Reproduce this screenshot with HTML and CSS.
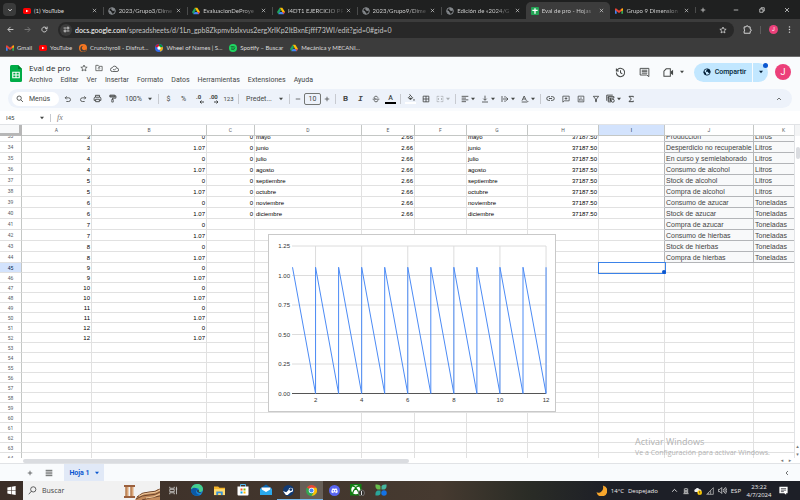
FILE: index.html
```html
<!DOCTYPE html>
<html lang="es">
<head>
<meta charset="utf-8">
<title>Eval de pro - Hojas de cálculo</title>
<link rel="stylesheet" href="styles.css">
</head>
<body>
<svg class="defs" aria-hidden="true">
  <symbol id="yt" viewBox="0 0 24 24"><rect x="0" y="3" width="24" height="18" rx="5" fill="#f00"/><path d="M9 8l8 4-8 4z" fill="#fff"/></symbol>
  <symbol id="globe" viewBox="0 0 24 24"><circle cx="12" cy="12" r="10" fill="none" stroke="#85898d" stroke-width="3"/><path d="M3 10l6 3 1 3 3 2-1 4-5-2-4-6zM11 3l-2 4 3 2 2 3 6-1 1-4-5-4z" fill="#85898d"/></symbol>
  <symbol id="drive" viewBox="0 0 24 24"><path d="M8 2h8l8 13h-8z" fill="#fbbc04"/><path d="M8 2l4 7-8 13-4-7z" fill="#1ea362"/><path d="M8 15h16l-4 7H4z" fill="#4285f4"/><path d="M16 15h8l-4 7z" fill="#ea4335"/></symbol>
  <symbol id="sheets" viewBox="0 0 24 24"><rect width="24" height="24" rx="3" fill="#23a455"/><path d="M12 4v16M4 10h16" stroke="#fff" stroke-width="4"/></symbol>
  <symbol id="gmail" viewBox="0 0 24 24"><path d="M0 5v15h5V10z" fill="#4285f4"/><path d="M24 5v15h-5V10z" fill="#34a853"/><path d="M0 5l3-1 9 7 9-7 3 1v4l-12 9L0 9z" fill="#ea4335"/><path d="M19 7l3-3 2 2v4l-5 3z" fill="#fbbc04"/></symbol>
  <symbol id="x" viewBox="0 0 24 24"><path d="M4 4l16 16M20 4L4 20" stroke="currentColor" stroke-width="3" fill="none"/></symbol>
  <symbol id="plus" viewBox="0 0 24 24"><path d="M12 3v18M3 12h18" stroke="currentColor" stroke-width="3" fill="none"/></symbol>
  <symbol id="minus" viewBox="0 0 24 24"><path d="M3 12h18" stroke="currentColor" stroke-width="3" fill="none"/></symbol>
  <symbol id="caret" viewBox="0 0 10 10"><path d="M0 2h10L5 8z" fill="currentColor"/></symbol>
  <symbol id="down" viewBox="0 0 24 24"><path d="M5 8l7 8 7-8" stroke="currentColor" stroke-width="3.5" fill="none"/></symbol>
  <symbol id="up" viewBox="0 0 24 24"><path d="M4 16l8-8 8 8" stroke="currentColor" stroke-width="3" fill="none"/></symbol>
  <symbol id="prev" viewBox="0 0 24 24"><path d="M16 4l-8 8 8 8" stroke="currentColor" stroke-width="3" fill="none"/></symbol>
  <symbol id="back" viewBox="0 0 24 24"><path d="M22 12H4M12 3l-9 9 9 9" stroke="currentColor" stroke-width="3" fill="none"/></symbol>
  <symbol id="fwd" viewBox="0 0 24 24"><path d="M2 12h18M12 3l9 9-9 9" stroke="currentColor" stroke-width="3" fill="none"/></symbol>
  <symbol id="reload" viewBox="0 0 24 24"><path d="M20 12a8.500 8.500 0 1 1-3-6.500l3 3M21 2v7h-7" stroke="currentColor" stroke-width="3" fill="none"/></symbol>
  <symbol id="tune" viewBox="0 0 24 24"><path d="M2 7h9M13 17h9" stroke="currentColor" stroke-width="3"/><circle cx="17" cy="7" r="3.500" fill="none" stroke="currentColor" stroke-width="3"/><circle cx="7" cy="17" r="3.500" fill="none" stroke="currentColor" stroke-width="3"/></symbol>
  <symbol id="star" viewBox="0 0 24 24"><path d="M12 3l2.700 6.200 6.800.600-5.200 4.400 1.600 6.600L12 17.300l-5.900 3.500 1.600-6.600-5.200-4.400 6.800-.600z" fill="none" stroke="currentColor" stroke-width="2.200"/></symbol>
  <symbol id="ext" viewBox="0 0 24 24"><path d="M3 5h5a3 3 0 0 1 6 0h5v6a3 3 0 0 1 0 6v5H3v-6a3 3 0 0 0 0-5z" fill="none" stroke="currentColor" stroke-width="2.500"/></symbol>
  <symbol id="dots" viewBox="0 0 24 24"><g fill="currentColor"><circle cx="12" cy="3" r="2.500"/><circle cx="12" cy="12" r="2.500"/><circle cx="12" cy="21" r="2.500"/></g></symbol>
  <symbol id="restore" viewBox="0 0 24 24"><path d="M3 8h13v13H3zM8 8V3h13v13h-5" fill="none" stroke="currentColor" stroke-width="3"/></symbol>
  <symbol id="search" viewBox="0 0 24 24"><circle cx="9.500" cy="9.500" r="6.500" fill="none" stroke="currentColor" stroke-width="2.500"/><path d="M14 14l7 7" stroke="currentColor" stroke-width="2.500"/></symbol>
  <symbol id="undo" viewBox="0 0 24 24"><path d="M8 4L3.500 8.500 8 13M4 8.500h10a5.500 5.500 0 0 1 0 11H7" fill="none" stroke="currentColor" stroke-width="2.500"/></symbol>
  <symbol id="redo" viewBox="0 0 24 24"><path d="M16 4l4.500 4.500L16 13M20 8.500H10a5.500 5.500 0 0 0 0 11h7" fill="none" stroke="currentColor" stroke-width="2.500"/></symbol>
  <symbol id="print" viewBox="0 0 24 24"><path d="M6.500 8V3.500h11V8M6 17H3v-5q0-3.500 3-3.500h12q3 0 3 3.500v5h-3M7 14h10v6.500H7z" fill="none" stroke="currentColor" stroke-width="2.500"/></symbol>
  <symbol id="paint" viewBox="0 0 24 24"><path d="M5 3h13v5H5zM18 5h3v6h-9v4" fill="none" stroke="currentColor" stroke-width="2.500"/><path d="M5 4h12v3H5z" fill="currentColor"/><path d="M10 14.500h4v7h-4z" fill="none" stroke="currentColor" stroke-width="2"/></symbol>
  <symbol id="arrowl" viewBox="0 0 10 8"><path d="M10 4H3M5 1L2 4l3 3" fill="none" stroke="currentColor" stroke-width="2"/></symbol>
  <symbol id="arrowr" viewBox="0 0 10 8"><path d="M0 4h7M5 1l3 3-3 3" fill="none" stroke="currentColor" stroke-width="2"/></symbol>
  <symbol id="strike" viewBox="0 0 24 24"><path d="M2 12.500h20M17.500 8c0-5-11-6-11 0 0 2 2 3 4 3.500M6.500 16c0 6 12 5.500 11 0" fill="none" stroke="currentColor" stroke-width="2.500"/></symbol>
  <symbol id="fill" viewBox="0 0 24 24"><path d="M8 2l9 9-6.500 6.500L4 11l7-7z" fill="none" stroke="currentColor" stroke-width="2.500"/><path d="M4.500 11.500h12l-6 6zM21 14q-2 3-2 4a2 2 0 0 0 4 0q0-1-2-4z" fill="currentColor"/></symbol>
  <symbol id="borders" viewBox="0 0 24 24"><path d="M3.500 3.500h17v17h-17zM12 3v18M3 12h18" fill="none" stroke="currentColor" stroke-width="2.500"/></symbol>
  <symbol id="merge" viewBox="0 0 24 24"><path d="M3 8V4h7M14 4h7v4M3 16v4h7M14 20h7v-4M1 12h8M6 9l3 3-3 3M23 12h-8M18 9l-3 3 3 3" fill="none" stroke="currentColor" stroke-width="2.200"/></symbol>
  <symbol id="align" viewBox="0 0 24 24"><path d="M2 4h20M2 9.300h13M2 14.600h20M2 20h13" stroke="currentColor" stroke-width="2.500"/></symbol>
  <symbol id="valign" viewBox="0 0 24 24"><path d="M3 21h18M12 2v13M7 11l5 5 5-5" fill="none" stroke="currentColor" stroke-width="2.500"/></symbol>
  <symbol id="wrap" viewBox="0 0 24 24"><path d="M3 3v18M12 3v5M12 16v5M6 12h14M16 7l5 5-5 5" fill="none" stroke="currentColor" stroke-width="2.500"/></symbol>
  <symbol id="rotate" viewBox="0 0 24 24"><path d="M3 17L9.500 3 16 17M6 12h7M2 21h17M18 17l4 4" fill="none" stroke="currentColor" stroke-width="2.500"/></symbol>
  <symbol id="link" viewBox="0 0 24 24"><path d="M10.500 7H7a5 5 0 0 0 0 10h3.500M13.500 7H17a5 5 0 0 1 0 10h-3.500M8 12h8" fill="none" stroke="currentColor" stroke-width="2.400"/></symbol>
  <symbol id="addnote" viewBox="0 0 24 24"><path d="M2.500 3.500h19v14H7l-4.500 4zM12 6.500v8M8 10.500h8" fill="none" stroke="currentColor" stroke-width="2.300"/></symbol>
  <symbol id="chart" viewBox="0 0 24 24"><path d="M3.500 3.500h17v17h-17zM8 17v-6M12 17V7M16 17v-4" fill="none" stroke="currentColor" stroke-width="2.300"/></symbol>
  <symbol id="filter" viewBox="0 0 24 24"><path d="M4 4h16l-6.500 8v8h-3v-8z" fill="none" stroke="currentColor" stroke-width="2.500"/></symbol>
  <symbol id="views" viewBox="0 0 24 24"><path d="M2 18V3h16M6 7h15v4H6zM6 7v14h7M6 16h8M12 11v9" fill="none" stroke="currentColor" stroke-width="2.500"/><circle cx="18" cy="18" r="4" fill="none" stroke="currentColor" stroke-width="2.500"/></symbol>
  <symbol id="sigma" viewBox="0 0 24 24"><path d="M19 7V4H6l7 8-7 8h13v-3" fill="none" stroke="currentColor" stroke-width="3"/></symbol>
  <symbol id="folder" viewBox="0 0 24 24"><path d="M2.500 20V4h7l2 3h10v13zM12 10v7M9 13l3-3 3 3" fill="none" stroke="currentColor" stroke-width="2.200"/></symbol>
  <symbol id="cloud" viewBox="0 0 24 24"><path d="M6.500 20a5 5 0 0 1-.500-10 6.500 6.500 0 0 1 12.500 1 4.500 4.500 0 0 1 0 9zM8.500 13.500l3 3 5-5" fill="none" stroke="currentColor" stroke-width="2.200"/></symbol>
  <symbol id="history" viewBox="0 0 24 24"><path d="M3 12a9 9 0 1 0 3-6.700L3 8M3 3v5.500h5.500M12 7v5.500l4 2.500" fill="none" stroke="currentColor" stroke-width="2.200"/></symbol>
  <symbol id="comment" viewBox="0 0 24 24"><path d="M2.500 3h19v18L17 17.500H2.500zM6 7h12M6 10.200h12M6 13.500h12" fill="none" stroke="currentColor" stroke-width="2"/></symbol>
  <symbol id="meet" viewBox="0 0 24 24"><path d="M7 4h9v16H2V9z" fill="none" stroke="currentColor" stroke-width="2.200"/><path d="M17 10l5-4v12l-5-4z" fill="currentColor"/></symbol>
  <symbol id="earth" viewBox="0 0 24 24"><circle cx="12" cy="12" r="9.500" fill="none" stroke="currentColor" stroke-width="2.500"/><path d="M3 9l6 6v5l3 2-6-2-4-6zM13 2v3l-4 3v3h6l1 4 3 1 3-4-1-6-4-3z" fill="currentColor"/></symbol>
  <symbol id="list" viewBox="0 0 24 24"><path d="M2 4h20M2 9.300h20M2 14.600h20M2 20h20" stroke="currentColor" stroke-width="2.500"/></symbol>
</svg>

<header class="browser">
  <div class="tabstrip">
    <button class="tabsearch" aria-label="Buscar pestañas"><svg class="i6"><use href="#down"/></svg></button>
    <nav class="tabs">
      <a class="tab" href="#"><svg class="i8"><use href="#yt"/></svg><span>(1) YouTube</span><svg class="i5"><use href="#x"/></svg></a>
      <a class="tab" href="#"><svg class="i8"><use href="#globe"/></svg><span class="fade">2023/Grupo3/Dime</span><svg class="i5"><use href="#x"/></svg></a>
      <a class="tab" href="#"><svg class="i8"><use href="#drive"/></svg><span class="fade">EvaluacionDeProye</span><svg class="i5"><use href="#x"/></svg></a>
      <a class="tab" href="#"><svg class="i8"><use href="#drive"/></svg><span class="fade">I4DT1 EJERCICIO PR</span><svg class="i5"><use href="#x"/></svg></a>
      <a class="tab" href="#"><svg class="i8"><use href="#globe"/></svg><span class="fade">2023/Grupo9/Dime</span><svg class="i5"><use href="#x"/></svg></a>
      <a class="tab" href="#"><svg class="i8"><use href="#globe"/></svg><span class="fade">Edición de «2024/G</span><svg class="i5"><use href="#x"/></svg></a>
      <a class="tab active" href="#"><svg class="i8"><use href="#sheets"/></svg><span class="fade">Eval de pro - Hojas</span><svg class="i5"><use href="#x"/></svg></a>
      <a class="tab" href="#"><svg class="i8"><use href="#gmail"/></svg><span class="fade">Grupo 9 Dimension</span><svg class="i5"><use href="#x"/></svg></a>
    </nav>
    <button class="newtab" aria-label="Nueva pestaña"><svg class="i6"><use href="#plus"/></svg></button>
    <div class="winctl">
      <button aria-label="Minimizar"><svg class="i6"><use href="#minus"/></svg></button>
      <button aria-label="Restaurar"><svg class="i6"><use href="#restore"/></svg></button>
      <button aria-label="Cerrar"><svg class="i6"><use href="#x"/></svg></button>
    </div>
  </div>
  <div class="addressrow">
    <button aria-label="Atrás"><svg class="i7"><use href="#back"/></svg></button>
    <button class="off" aria-label="Adelante"><svg class="i7"><use href="#fwd"/></svg></button>
    <button aria-label="Recargar"><svg class="i7"><use href="#reload"/></svg></button>
    <div class="omnibox">
      <span class="tune"><svg class="i7"><use href="#tune"/></svg></span>
      <span class="url"><b>docs.google.com</b>/spreadsheets/d/1Ln_gpb8ZkpmvbsIxvus2ergXrIKp2ItBxnEjfff73WI/edit?gid=0#gid=0</span>
      <svg class="i8"><use href="#star"/></svg>
    </div>
    <div class="chromeend">
      <svg class="i9"><use href="#ext"/></svg><i></i><span class="ava small">J</span><svg class="i7"><use href="#dots"/></svg>
    </div>
  </div>
  <nav class="bookmarks">
    <a href="#"><svg class="i8"><use href="#gmail"/></svg>Gmail</a>
    <a href="#"><svg class="i8"><use href="#yt"/></svg>YouTube</a>
    <a href="#"><svg class="i8" viewBox="0 0 24 24"><circle cx="12" cy="12" r="12" fill="#f47521"/><path d="M22 14a9 9 0 1 1-9-9 7 7 0 1 0 9 9z" fill="#3c3c3c"/><circle cx="15" cy="12" r="4.500" fill="#f47521"/></svg>Crunchyroll - Disfrut...</a>
    <a href="#"><svg class="i8" viewBox="0 0 24 24"><circle cx="12" cy="12" r="12" fill="#3369e8"/><path d="M12 12V0a12 12 0 0 1 11 8z" fill="#009925"/><path d="M12 12l11-4a12 12 0 0 1-7 15z" fill="#eeb211"/><path d="M12 12L1 8A12 12 0 0 1 12 0z" fill="#d50f25"/><circle cx="12" cy="12" r="5" fill="#fff"/></svg>Wheel of Names | S...</a>
    <a href="#"><svg class="i8" viewBox="0 0 24 24"><circle cx="12" cy="12" r="12" fill="#1ed760"/><path d="M5 8q8-2 14 2M6 12.500q7-2 12 1.500M7 16.500q5-1 9 1" fill="none" stroke="#1b3d27" stroke-width="2"/></svg>Spotify – Buscar</a>
    <a href="#"><svg class="i8"><use href="#drive"/></svg>Mecánica y MECANI...</a>
  </nav>
</header>

<section class="docs">
  <div class="dochead">
    <svg class="doclogo" viewBox="0 0 24 34"><path d="M3 0h13l8 8v23q0 3-3 3H3q-3 0-3-3V3q0-3 3-3z" fill="#00ac47"/><path d="M16 0l8 8h-8z" fill="#00832d"/><path d="M5.500 14.500h13v11h-13zM12 14v12M5 20h14" fill="none" stroke="#fff" stroke-width="2.200"/></svg>
    <div class="doctitles">
      <div class="titleline"><h1>Eval de pro</h1><svg class="i8"><use href="#star"/></svg><svg class="i8"><use href="#folder"/></svg><svg class="i9"><use href="#cloud"/></svg></div>
      <nav class="menus"><a href="#">Archivo</a><a href="#">Editar</a><a href="#">Ver</a><a href="#">Insertar</a><a href="#">Formato</a><a href="#">Datos</a><a href="#">Herramientas</a><a href="#">Extensiones</a><a href="#">Ayuda</a></nav>
    </div>
    <div class="docactions">
      <button aria-label="Historial"><svg class="i11"><use href="#history"/></svg></button>
      <button aria-label="Comentarios"><svg class="i11"><use href="#comment"/></svg></button>
      <button aria-label="Reunión"><svg class="i11"><use href="#meet"/></svg><svg class="i4"><use href="#caret"/></svg></button>
      <div class="share"><button class="sharemain"><svg class="i8"><use href="#earth"/></svg>Compartir</button><button class="sharemore" aria-label="Más opciones"><svg class="i4"><use href="#caret"/></svg></button><span class="dot"></span></div>
      <span class="ava">J</span>
    </div>
  </div>
  <div class="toolbar">
    <label class="menusearch"><svg class="i8"><use href="#search"/></svg><input type="text" placeholder="Menús" aria-label="Menús"></label>
    <button aria-label="Deshacer"><svg class="i8"><use href="#undo"/></svg></button>
    <button aria-label="Rehacer"><svg class="i8"><use href="#redo"/></svg></button>
    <button aria-label="Imprimir"><svg class="i9"><use href="#print"/></svg></button>
    <button aria-label="Copiar formato"><svg class="i9"><use href="#paint"/></svg></button>
    <button class="drop zoom">100%<svg class="i4"><use href="#caret"/></svg></button><i></i>
    <button>$</button><button>%</button><button class="dec">.0<svg><use href="#arrowl"/></svg></button><button class="dec">.00<svg><use href="#arrowr"/></svg></button><button class="n123">123</button><i></i>
    <button class="drop font">Predet...<svg class="i4"><use href="#caret"/></svg></button><i></i>
    <button class="step" aria-label="Reducir"><svg class="i6"><use href="#minus"/></svg></button><input class="size" value="10" aria-label="Tamaño de fuente"><button class="step" aria-label="Aumentar"><svg class="i6"><use href="#plus"/></svg></button><i></i>
    <button class="big"><b>B</b></button><button class="big"><em>I</em></button><button aria-label="Tachado"><svg class="i8"><use href="#strike"/></svg></button><button class="textcolor">A</button><i></i>
    <button class="fillcolor" aria-label="Relleno"><svg class="i8"><use href="#fill"/></svg></button>
    <button aria-label="Bordes"><svg class="i8"><use href="#borders"/></svg></button>
    <button class="combo faded" aria-label="Combinar"><svg class="i8"><use href="#merge"/></svg><svg class="i4"><use href="#caret"/></svg></button><i></i>
    <button class="combo" aria-label="Alinear"><svg class="i8"><use href="#align"/></svg><svg class="i4"><use href="#caret"/></svg></button>
    <button class="combo" aria-label="Alineación vertical"><svg class="i8"><use href="#valign"/></svg><svg class="i4"><use href="#caret"/></svg></button>
    <button class="combo" aria-label="Ajuste"><svg class="i8"><use href="#wrap"/></svg><svg class="i4"><use href="#caret"/></svg></button>
    <button class="combo" aria-label="Rotación"><svg class="i8"><use href="#rotate"/></svg><svg class="i4"><use href="#caret"/></svg></button><i></i>
    <button aria-label="Enlace"><svg class="i9"><use href="#link"/></svg></button>
    <button aria-label="Comentar"><svg class="i8"><use href="#addnote"/></svg></button>
    <button aria-label="Gráfico"><svg class="i8"><use href="#chart"/></svg></button>
    <button aria-label="Filtro"><svg class="i8"><use href="#filter"/></svg></button>
    <button class="combo" aria-label="Vistas"><svg class="i9"><use href="#views"/></svg><svg class="i4"><use href="#caret"/></svg></button>
    <button aria-label="Funciones"><svg class="i8"><use href="#sigma"/></svg></button>
    <button class="collapse" aria-label="Ocultar menús"><svg class="i6"><use href="#up"/></svg></button>
  </div>
</section>

<div class="formula">
  <input class="namebox" value="I45" aria-label="Cuadro de nombres"><svg class="i4"><use href="#caret"/></svg><i></i><em>fx</em><input class="fxinput" aria-label="Fórmula">
</div>

<main class="sheet">
  <div class="gridwrap">
    <div class="grid" id="grid">
      <table>
        <colgroup><col class="c0"><col class="cA"><col class="cB"><col class="cC"><col class="cD"><col class="cE"><col class="cF"><col class="cG"><col class="cH"><col class="cI"><col class="cJ"><col class="cK"></colgroup>
        <thead><tr><th class="corner"></th><th>A</th><th>B</th><th>C</th><th>D</th><th>E</th><th>F</th><th>G</th><th>H</th><th class="sel">I</th><th>J</th><th>K</th></tr></thead>
        <tbody id="rows"></tbody>
      </table>
    </div>
    <svg class="plot" id="plot" viewBox="0 0 286 176" role="img" aria-label="Gráfico de líneas"></svg>
    <div class="watermark"><strong>Activar Windows</strong><span>Ve a Configuración para activar Windows.</span></div>
  </div>
  <div class="vscroll"><span class="head"></span><span class="thumb"></span><span class="arrow">▴</span><span class="arrow">▾</span></div>
</main>
<div class="hscroll"><span class="thumb"></span><span class="arrow">◂</span><span class="arrow">▸</span></div>

<nav class="sheetbar">
  <button aria-label="Añadir hoja"><svg class="i6"><use href="#plus"/></svg></button>
  <button aria-label="Todas las hojas"><svg class="i8"><use href="#list"/></svg></button>
  <button class="sheettab">Hoja 1<svg class="i4"><use href="#caret"/></svg></button>
  <button class="side" aria-label="Mostrar panel"><svg class="i6"><use href="#prev"/></svg></button>
</nav>

<footer class="taskbar">
  <button class="start" aria-label="Inicio"><svg class="i9" viewBox="0 0 24 24"><path d="M1 4l10-2v9H1zM12.500 2L23 0v11H12.500zM1 12.500h10V22L1 20zM12.500 12.500H23V24l-10.500-2z" fill="#fff"/></svg></button>
  <label class="tasksearch"><svg class="i9" viewBox="0 0 24 24"><circle cx="14" cy="9" r="7" fill="none" stroke="#333" stroke-width="2"/><path d="M9 14l-7 8" stroke="#333" stroke-width="2"/></svg><input type="text" placeholder="Buscar" aria-label="Buscar">
    <svg class="art" viewBox="0 0 38 16"><path d="M2 2h11M2 13h11" stroke="#9a5f3c" stroke-width="2"/><path d="M5 3v9M10 3v9" stroke="#dca778" stroke-width="3"/><path d="M4 3v9M9 3v9" stroke="#a3693f" stroke-width="1"/><path d="M13 16q4-8 14-8 6 0 9-3l2 2v9z" fill="#c18a5b"/><path d="M15 13q5-5 12-5t11-3M14 15q6-4 13-4t11-3M20 16q6-2 18-4" stroke="#6d452b" stroke-width="1" fill="none"/><path d="M17 12q5-3 11-3t10-3M24 14q7 0 14-4" stroke="#efc99c" stroke-width="1" fill="none"/></svg></label>
  <div class="apps">
    <button aria-label="Vista de tareas"><svg class="i9" viewBox="0 0 24 24"><path d="M2 2v4h12V2M2 22v-4h12v4M2 9h12v6H2zM20 2v20M18 8h4" fill="none" stroke="#ddd" stroke-width="2"/></svg></button>
    <button aria-label="Edge"><svg class="i12" viewBox="0 0 24 24"><circle cx="12" cy="12" r="12" fill="#1683d8"/><path d="M0 11C1-3 23-4 24 10c0 5-5 7-9 5 3-4-1-8-5-7S3 9 0 11z" fill="#45cf8e"/><path d="M0 11c5-6 13-3 13 1-5 1-4 9 5 10C8 27-1 20 0 11z" fill="#0c59a4"/><path d="M14 11q-4 4 1 6 5 1 8-2-4 2-8 0 2-2-1-4z" fill="#34302a"/></svg></button>
    <button aria-label="Explorador"><svg class="i11" viewBox="0 0 24 24"><path d="M0 3h9l3 3h12v16H0z" fill="#f5b52b"/><path d="M0 9h24v13H0z" fill="#ffdb70"/><path d="M5 14h14v8h-4v-4H9v4H5z" fill="#3b93d9"/></svg></button>
    <button aria-label="Tienda"><svg class="i12" viewBox="0 0 24 24"><path d="M7 6V1h10v5" fill="none" stroke="#4fb6ee" stroke-width="2"/><path d="M1 5h22v16q0 2-2 2H3q-2 0-2-2z" fill="#fff"/><path d="M7 9h4v4H7z" fill="#f25022"/><path d="M13 9h4v4h-4z" fill="#7fba00"/><path d="M7 15h4v4H7z" fill="#00a4ef"/><path d="M13 15h4v4h-4z" fill="#ffb900"/></svg></button>
    <button aria-label="Correo"><svg class="i12" viewBox="0 0 24 24"><path d="M0 9l12-8 12 8v13H0z" fill="#0a64ad"/><path d="M3 7h18v9H3z" fill="#fff"/><path d="M0 9l12 7 12-7v13H0z" fill="#2aa9ec"/></svg></button>
    <button class="open" aria-label="Steam"><svg class="i11" viewBox="0 0 24 24"><circle cx="12" cy="12" r="12" fill="#123a73"/><path d="M0 13l7 3 5-5a5 5 0 1 1 5 5l-5 4a4 4 0 0 1-7 0z" fill="#fff"/><circle cx="17" cy="10" r="3" fill="#123a73"/></svg></button>
    <button class="open current" aria-label="Chrome"><svg class="i11" viewBox="0 0 24 24"><circle cx="12" cy="12" r="12" fill="#34a853"/><path d="M12 12L2 5.500a12 12 0 0 1 20.500.500z" fill="#ea4335"/><path d="M12 6h10.500A12 12 0 0 1 12 24l5-9z" fill="#fbbc04"/><circle cx="12" cy="12" r="6" fill="#fff"/><circle cx="12" cy="12" r="4.500" fill="#4285f4"/></svg></button>
    <button aria-label="Discord"><svg class="i11" viewBox="0 0 24 24"><circle cx="12" cy="12" r="12" fill="#5865f2"/><path d="M5 16q0-6 3-9l3 1h2l3-1q3 3 3 9l-4 2-1-2h-4l-1 2z" fill="#fff"/><circle cx="9.500" cy="12.500" r="1.600" fill="#5865f2"/><circle cx="14.500" cy="12.500" r="1.600" fill="#5865f2"/></svg></button>
    <button aria-label="Xbox"><svg class="app-wide" viewBox="0 0 30 24"><path d="M0 0h23v23H0z" fill="#107c10"/><circle cx="11.500" cy="11.500" r="9" fill="#fff"/><path d="M5 19Q7 12 11.500 8 16 12 18 19M5 4q4 0 6.500 3Q14 4 18 4" fill="none" stroke="#107c10" stroke-width="2.500"/><circle cx="23" cy="18" r="6" fill="#33302c" stroke="#aaa"/><path d="M23 14v8" stroke="#ddd" stroke-width="2"/></svg></button>
    <button aria-label="Mesa"><svg class="i12" viewBox="0 0 24 24"><path d="M1 1q9-1 10 4v6H5Q0 9 1 1z" fill="#67bd4c"/><path d="M23 1q-9-1-10 4v6h6q5-2 4-10z" fill="#45b6a0"/><path d="M1 23q9 1 10-4v-6H5q-5 2-4 10z" fill="#2aa59a"/><circle cx="18" cy="18" r="5.500" fill="#1373e6"/></svg></button>
  </div>
  <div class="tray">
    <svg class="i11" viewBox="0 0 24 24"><path d="M15 1a12 12 0 1 1-14 15c8 3 17-4 14-15z" fill="#f6a52c"/></svg>
    <span class="temp">14°C</span><span class="wx">Despejado</span>
    <svg class="i7"><use href="#up"/></svg>
    <svg class="i8" viewBox="0 0 24 24"><path d="M8 5h8M7 5v13h10V5M4 20h16M12 9v6" fill="none" stroke="#ccc" stroke-width="2.500"/><circle cx="12" cy="12" r="3" fill="none" stroke="#ccc" stroke-width="2"/></svg>
    <svg class="i8" viewBox="0 0 24 24"><path d="M3 15a5 5 0 0 1 2-9 6 6 0 0 1 11 1 5 5 0 0 1 5 8z" fill="#eee"/><circle cx="17" cy="17" r="7" fill="#fc0"/><path d="M17 12v6M17 20v2" stroke="#333" stroke-width="2"/></svg>
    <svg class="i8" viewBox="0 0 24 24"><path d="M2 22L22 2v20zM8 22v-6M14 22V10" fill="none" stroke="#aaa" stroke-width="2.500"/></svg>
    <svg class="i9" viewBox="0 0 24 24"><path d="M1 9h4l5-5v16l-5-5H1zM14 8q3 4 0 8M17 5q5 7 0 14M20 3q7 9 0 18" fill="none" stroke="#ddd" stroke-width="2"/></svg>
    <span class="lang">ESP</span>
    <span class="clock"><span>23:22</span><span>4/7/2024</span></span>
    <svg class="i9" viewBox="0 0 24 24"><path d="M1 2h22v17h-4v4l-5-4H1z" fill="#fff"/><path d="M5 7h14M5 11h14M5 15h8" stroke="#33343c" stroke-width="2"/></svg>
  </div>
</footer>
<script src="script.js"></script>
</body>
</html>
```
FILE: styles.css
```css
* { box-sizing: border-box; }
html, body { height: 100%; margin: 0; }
body { display: flex; flex-direction: column; overflow: hidden; background: #fff; color: #444746; font: 7px/10px Roboto, "Liberation Sans", sans-serif; }
button { display: flex; align-items: center; justify-content: center; padding: 0; border: 0; background: none; color: inherit; font: inherit; flex: none; }
input { min-width: 0; padding: 0; border: 0; outline: 0; background: none; color: inherit; font: inherit; }
input::placeholder { color: inherit; opacity: 1; }
a { color: inherit; text-decoration: none; }
svg { flex: none; display: block; }
.defs { position: absolute; width: 0; height: 0; }
.i4 { width: 4px; height: 4px; }
.i5 { width: 5px; height: 5px; }
.i6 { width: 6px; height: 6px; }
.i7 { width: 7px; height: 7px; }
.i8 { width: 8px; height: 8px; }
.i9 { width: 9px; height: 9px; }
.i11 { width: 11px; height: 11px; }
.i12 { width: 12px; height: 12px; }

/* Browser frame */
.browser { flex: none; background: #3c3c3c; color: #dcdcdc; font-family: Lato, sans-serif; font-size: 6px; border-bottom: 1px solid #6c6c6c; }
.tabstrip { display: flex; align-items: center; height: 19px; background: #1f2020; }
.tabsearch { width: 13px; height: 13px; margin: 0 2px 0 3px; border-radius: 4px; background: #3a3b3b; }
.tabs { display: flex; flex: 1; min-width: 0; height: 100%; padding-top: 2px; }
.tab { position: relative; display: flex; flex: 1 1 0; min-width: 0; align-items: center; gap: 3px; padding: 0 6px 0 5px; border-radius: 5px 5px 0 0; }
.tab + .tab:not(.active)::before { content: ""; position: absolute; left: 0; width: 1px; height: 8px; background: #4a4b4b; }
.tab.active + .tab::before { display: none; }
.tab span { flex: 1; min-width: 0; white-space: nowrap; }
.tab .fade { color: transparent; background: linear-gradient(90deg, #dcdcdc 38px, #3c3c3c 54px); background-clip: text; -webkit-background-clip: text; }
.tab.active { background: #3c3c3c; }
.newtab { width: 14px; border-left: 1px solid #4a4b4b; }
.winctl { display: flex; width: 91px; padding-left: 14px; }
.winctl button { flex: 1; }
.addressrow { display: flex; align-items: center; height: 21px; padding-left: 2px; }
.addressrow > button { width: 17px; }
.off { opacity: .4; }
.omnibox { display: flex; flex: 1; align-items: center; gap: 3px; height: 16px; margin-left: 5px; padding: 0 7px 0 2px; border-radius: 8px; background: #282828; font-size: 7px; }
.tune { display: flex; align-items: center; justify-content: center; width: 12px; height: 12px; border-radius: 6px; background: #3c3c3c; }
.url { flex: 1; overflow: hidden; white-space: nowrap; color: #c4c4c4; }
.url b { font-weight: 400; color: #fff; }
.chromeend { display: flex; align-items: center; width: 66px; justify-content: space-between; padding: 0 7px 0 9px; }
.chromeend i { width: 1px; height: 8px; background: #5c5c5c; }
.ava { display: flex; align-items: center; justify-content: center; width: 16px; height: 16px; border-radius: 50%; background: #ec407a; color: #fff; font: 9px/16px Roboto, sans-serif; }
.ava.small { width: 9px; height: 9px; font-size: 5px; line-height: 9px; }
.bookmarks { display: flex; align-items: center; gap: 7px; height: 16px; padding-left: 6px; }
.bookmarks a { display: flex; align-items: center; gap: 3px; white-space: nowrap; }

/* Document header */
.docs { flex: none; padding-bottom: 3px; background: #f9fbfd; }
.dochead { display: flex; align-items: center; height: 32px; padding: 0 9px 0 10px; }
.doclogo { width: 12px; height: 17px; margin-right: 7px; }
.doctitles { flex: 1; min-width: 0; padding-top: 2px; }
.titleline { display: flex; align-items: center; gap: 7px; }
.titleline h1 { margin: 0 3px 0 0; font: 8px/12px "Open Sans", sans-serif; color: #1f1f1f; }
.menus { display: flex; gap: 8px; font-size: 7px; line-height: 12px; white-space: nowrap; }
.docactions { display: flex; align-self: flex-start; align-items: center; gap: 13px; height: 30px; }
.docactions button { gap: 6px; }
.share { position: relative; display: flex; width: 74px; height: 19px; margin-left: -3px; border-radius: 10px; background: #c2e7ff; color: #001d35; }
.share .sharemain { width: 58px; padding-left: 3px; gap: 4px; font-weight: 500; }
.share .sharemore { flex: 1; border-left: 1px solid #f9fbfd; }
.dot { position: absolute; top: 0; right: 0; width: 5px; height: 5px; border-radius: 50%; background: #0b57d0; }
.docactions .ava { margin-left: -6px; }
.toolbar { display: flex; align-items: center; height: 19px; margin: 0 8px; padding-left: 4px; border-radius: 10px; background: #edf2fa; }
.toolbar button { width: 15px; height: 14px; }
.toolbar > i { flex: none; width: 1px; height: 10px; margin: 0 2px; background: #c7cad0; }
.menusearch { display: flex; flex: none; align-items: center; gap: 5px; width: 47px; height: 14px; margin-right: 1px; padding-left: 4px; border-radius: 7px; background: #fff; }
.menusearch input { width: 28px; }
.toolbar .drop { justify-content: space-between; }
.toolbar .zoom { width: 36px; padding: 0 4px 0 5px; }
.toolbar .font { width: 44px; margin-left: 2px; padding: 0 4px 0 3px; }
.toolbar .n123 { font-size: 6px; }
.toolbar .dec { flex-direction: column; font-size: 6px; font-weight: 700; line-height: 7px; }
.dec svg { width: 5px; height: 4px; align-self: flex-end; margin-right: 2px; }
.toolbar .step { width: 12px; }
.size { flex: none; width: 17px; height: 12px; border: 1px solid #747775; border-radius: 2px; text-align: center; }
.toolbar .big { font-size: 8px; }
.big em { font-weight: 700; font-family: "Liberation Mono", monospace; }
.toolbar .textcolor { width: 11px; height: 11px; margin: 0 2px; border-bottom: 2px solid #000; font-weight: 500; }
.toolbar .fillcolor { width: 11px; height: 11px; margin: 0 2px; border-bottom: 2px solid #fff; }
.toolbar .combo { width: 20px; gap: 2px; }
.faded { opacity: .4; }
.toolbar .collapse { margin: 0 6px 0 auto; }

/* Formula bar */
.formula { display: flex; flex: none; align-items: center; height: 14px; padding-left: 6px; border-bottom: 1px solid #e1e3e6; font-size: 6px; }
.namebox { width: 34px; }
.formula i { width: 1px; height: 8px; margin: 0 6px; background: #c7cad0; }
.formula em { font: italic 8px/10px "Liberation Serif", serif; color: #777; }
.fxinput { flex: 1; }

/* Grid */
.sheet { display: flex; flex: 1; min-height: 0; }
.gridwrap { position: relative; flex: 1; min-width: 0; overflow: hidden; }
.grid { height: 100%; overflow: hidden; }
table { table-layout: fixed; width: 814px; border-collapse: separate; border-spacing: 0; font: 6px/8px "Liberation Sans", sans-serif; color: #000; }
.c0 { width: 22px; } .cA { width: 70px; } .cB { width: 115px; } .cC { width: 48px; } .cD { width: 107px; } .cE { width: 53px; }
.cF { width: 52px; } .cG { width: 61px; } .cH { width: 71px; } .cI { width: 66px; } .cJ { width: 89px; } .cK { width: 60px; }
th, td { height: 10px; padding: 0 1px; border: 0 solid #e1e1e1; border-width: 0 1px 1px 0; overflow: hidden; white-space: nowrap; }
td { vertical-align: bottom; }
.tall th, .tall td { height: 11px; }
thead th { position: sticky; top: 0; z-index: 1; height: 11px; background: #fff; border-color: #c4c7c5; }
th { font: 5px/8px Roboto, sans-serif; color: #575b5f; }
thead .corner { background: #f8f9fa; border: 0 solid #b7b7b7; border-width: 0 3px 3px 0; }
tbody th { border-right-color: #c4c7c5; }
th.sel { background: #d3e3fd; color: #041e49; }
.num { text-align: right; }
.boxed { background: #f8f9fa; border-color: #b3b5b8; font-size: 7px; color: #434343; }
.edge { border-right-color: #b3b5b8; }
td.cursor { position: relative; overflow: visible; outline: 1px solid #3b82e8; }
td.cursor::after { content: ""; position: absolute; right: -2px; bottom: -2px; width: 4px; height: 4px; border-radius: 50%; background: #0b57d0; }
.plot { position: absolute; left: 268px; top: 109px; width: 288px; height: 178px; background: #fff; border: 1px solid #c9c9c9; font: 6px "Liberation Sans", sans-serif; }
.plot text { fill: #333; }
.plot .rule { stroke: #dcdcdc; fill: none; }
.plot .axis { stroke: #555; }
.plot .line { stroke: #4c8bf5; fill: none; }
.watermark { position: absolute; left: 635px; bottom: 0; display: flex; flex-direction: column; color: #b2b2b2; font: 7px/10px "Open Sans", sans-serif; white-space: nowrap; }
.watermark strong { font-weight: 400; font-size: 9px; line-height: 12px; }
.vscroll { display: flex; flex-direction: column; align-items: center; width: 6px; border-left: 1px solid #e1e3e6; }
.vscroll .head { width: 100%; height: 11px; margin-bottom: 11px; background: #f4f5f6; }
.vscroll .thumb { width: 4px; height: 12px; margin-bottom: auto; border-radius: 2px; background: #dadce0; }
.arrow { color: #777; font: 5px/8px "DejaVu Sans", sans-serif; text-align: center; }
.hscroll { display: flex; flex: none; align-items: center; height: 6px; padding: 0 6px 0 23px; border-bottom: 1px solid #e1e3e6; }
.hscroll .thumb { width: 50%; height: 4px; margin-right: auto; border-radius: 2px; background: #dadce0; }
.hscroll .arrow { width: 8px; line-height: 5px; }

/* Sheet tabs */
.sheetbar { display: flex; flex: none; height: 17px; padding-left: 20px; background: #f9fbfd; }
.sheetbar button { width: 19px; }
.sheetbar .sheettab { width: 40px; margin-left: 6px; gap: 5px; background: #e1e9f7; color: #0b57d0; font-weight: 700; }
.sheetbar .side { margin: 0 4px 0 auto; }

/* Taskbar */
.taskbar { display: flex; flex: none; height: 19px; background: linear-gradient(90deg, #3b2e27 0, #463a30 55%, #2a2c26 66%, #1d1f27 76%); color: #eee; font-family: "Open Sans", sans-serif; }
.start { width: 23px; }
.tasksearch { display: flex; flex: none; align-items: center; width: 137px; padding-left: 5px; gap: 5px; background: #f1f1f1; color: #444; }
.tasksearch input { flex: 1; }
.art { width: 38px; height: 16px; align-self: flex-end; }
.apps { display: flex; flex: 1; padding-left: 2px; }
.apps button { width: 23px; border-bottom: 1px solid transparent; }
.apps .open { border-color: #76b9ed; }
.apps .current { background: #675f57; }
.app-wide { width: 15px; height: 12px; }
.tray { display: flex; align-items: center; gap: 4px; padding-right: 12px; font-size: 6px; }
.wx { margin-right: 9px; }
.clock { display: flex; flex-direction: column; align-items: center; width: 28px; line-height: 8px; margin-right: 2px; }
```
FILE: script.js
```js
const months = ['mayo', 'junio', 'julio', 'agosto', 'septiembre', 'octubre', 'noviembre', 'diciembre'];
const stock = [
  ['Producción', 'Litros'], ['Desperdicio no recuperable', 'Litros'], ['En curso y semielaborado', 'Litros'],
  ['Consumo de alcohol', 'Litros'], ['Stock de alcohol', 'Litros'], ['Compra de alcohol', 'Litros'],
  ['Consumo de azucar', 'Toneladas'], ['Stock de azucar', 'Toneladas'], ['Compra de azucar', 'Toneladas'],
  ['Consumo de hierbas', 'Toneladas'], ['Stock de hierbas', 'Toneladas'], ['Compra de hierbas', 'Toneladas']
];
const cell = (text, cls) => `<td class="${cls || ''}">${text}</td>`;

let html = '';
for (let r = 33; r <= 64; r++) {
  const i = r - 33;
  const month = months[i];
  const item = stock[i];
  html += `<tr class="${r <= 44 ? 'tall' : ''}"><th class="${r === 45 ? 'sel' : ''}">${r}</th>`
    + cell(r <= 52 ? Math.floor(r / 2 - 13.5) : '', 'num')
    + cell(r <= 52 ? (r % 2 ? '0' : '1.07') : '', 'num')
    + cell(month ? '0' : '', 'num')
    + cell(month || '')
    + cell(month ? '2.66' : '', 'num')
    + cell('')
    + cell(month || '')
    + cell(month ? '37187.50' : '', 'num')
    + cell('', r === 45 ? 'cursor' : item ? 'edge' : '')
    + cell(item ? item[0] : '', item ? 'boxed' : '')
    + cell(item ? item[1] : '', item ? 'boxed' : '')
    + '</tr>';
}
document.getElementById('rows').innerHTML = html;
document.getElementById('grid').scrollTop = 5;

// Sawtooth chart: falls from 1.07 to 0 between consecutive months.
const px = m => 23.5 + (m - 1) * 23.05;
const py = v => 158.5 - v * 118;
let out = '';
for (let v = 0; v <= 1.25; v += 0.25) {
  out += `<path class="rule" d="M23 ${py(v)}H277"/><text x="21" y="${py(v) + 2}" text-anchor="end">${v.toFixed(2)}</text>`;
}
for (let m = 2; m <= 12; m += 2) {
  out += `<path class="rule" d="M${px(m)} ${py(1.25)}V${py(0)}"/><text x="${px(m)}" y="167" text-anchor="middle">${m}</text>`;
}
let d = `M${px(1)} ${py(1.07)}`;
for (let m = 2; m <= 12; m++) d += `L${px(m)} ${py(0)}V${py(1.07)}`;
out += `<path class="rule axis" d="M23 ${py(0)}H277"/><path class="line" stroke-linejoin="bevel" d="${d}"/>`;
document.getElementById('plot').innerHTML = out;
```
